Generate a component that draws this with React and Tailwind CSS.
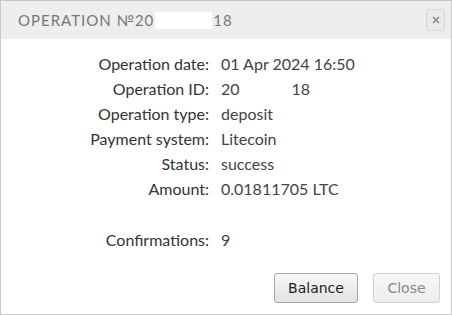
import { X } from "lucide-react";

const rows = [
  { label: "Operation date:", value: "01 Apr 2024 16:50" },
  { label: "Operation ID:", value: "id" },
  { label: "Operation type:", value: "deposit" },
  { label: "Payment system:", value: "Litecoin" },
  { label: "Status:", value: "success" },
  { label: "Amount:", value: "0.01811705 LTC" },
];

export default function App() {
  return (
    <div className="w-[452px] h-[315px] bg-white border border-[#c8c8c8] flex flex-col overflow-hidden">
      {/* header */}
      <div className="h-[38px] bg-[#eeeeee] flex items-center justify-between pl-[17px] pr-[6px] shrink-0">
        <div className="flex items-center text-[15px] tracking-[1px] text-[#777] font-['Lato',sans-serif]">
          <span>OPERATION №20</span>
          <span className="w-[57px] h-[17px] bg-white mx-[1px]" />
          <span>18</span>
        </div>
        <button className="w-[19px] h-[22px] rounded-[3px] border border-[#d6d6d6] bg-[#eaeaea] flex items-center justify-center">
          <X size={10} strokeWidth={4} color="#8a8a8a" />
        </button>
      </div>

      {/* body */}
      <div className="flex-1 pt-[12px] font-['Lato',sans-serif] text-[16px]">
        {rows.map((r) => (
          <div key={r.label} className="flex h-[25px] items-center">
            <div className="w-[208px] text-right text-[#333]">{r.label}</div>
            <div className="pl-[12px] text-[#444]">
              {r.value === "id" ? (
                <span className="flex">
                  <span>20</span>
                  <span className="w-[52px]" />
                  <span>18</span>
                </span>
              ) : (
                r.value
              )}
            </div>
          </div>
        ))}
        <div className="flex h-[25px] items-center mt-[26px]">
          <div className="w-[208px] text-right text-[#333]">Confirmations:</div>
          <div className="pl-[12px] text-[#444]">9</div>
        </div>
      </div>

      {/* footer */}
      <div className="flex justify-end gap-[15px] pr-[11px] pb-[11px] font-['DejaVu_Sans',sans-serif] text-[14px]">
        <button className="w-[84px] h-[30px] rounded-[3px] border border-[#a8a8a8] bg-gradient-to-b from-[#f8f8f8] to-[#e2e2e2] text-[#222]">
          Balance
        </button>
        <button className="w-[67px] h-[30px] rounded-[3px] border border-[#d2d2d2] bg-gradient-to-b from-[#f8f8f8] to-[#ececec] text-[#888]">
          Close
        </button>
      </div>
    </div>
  );
}
